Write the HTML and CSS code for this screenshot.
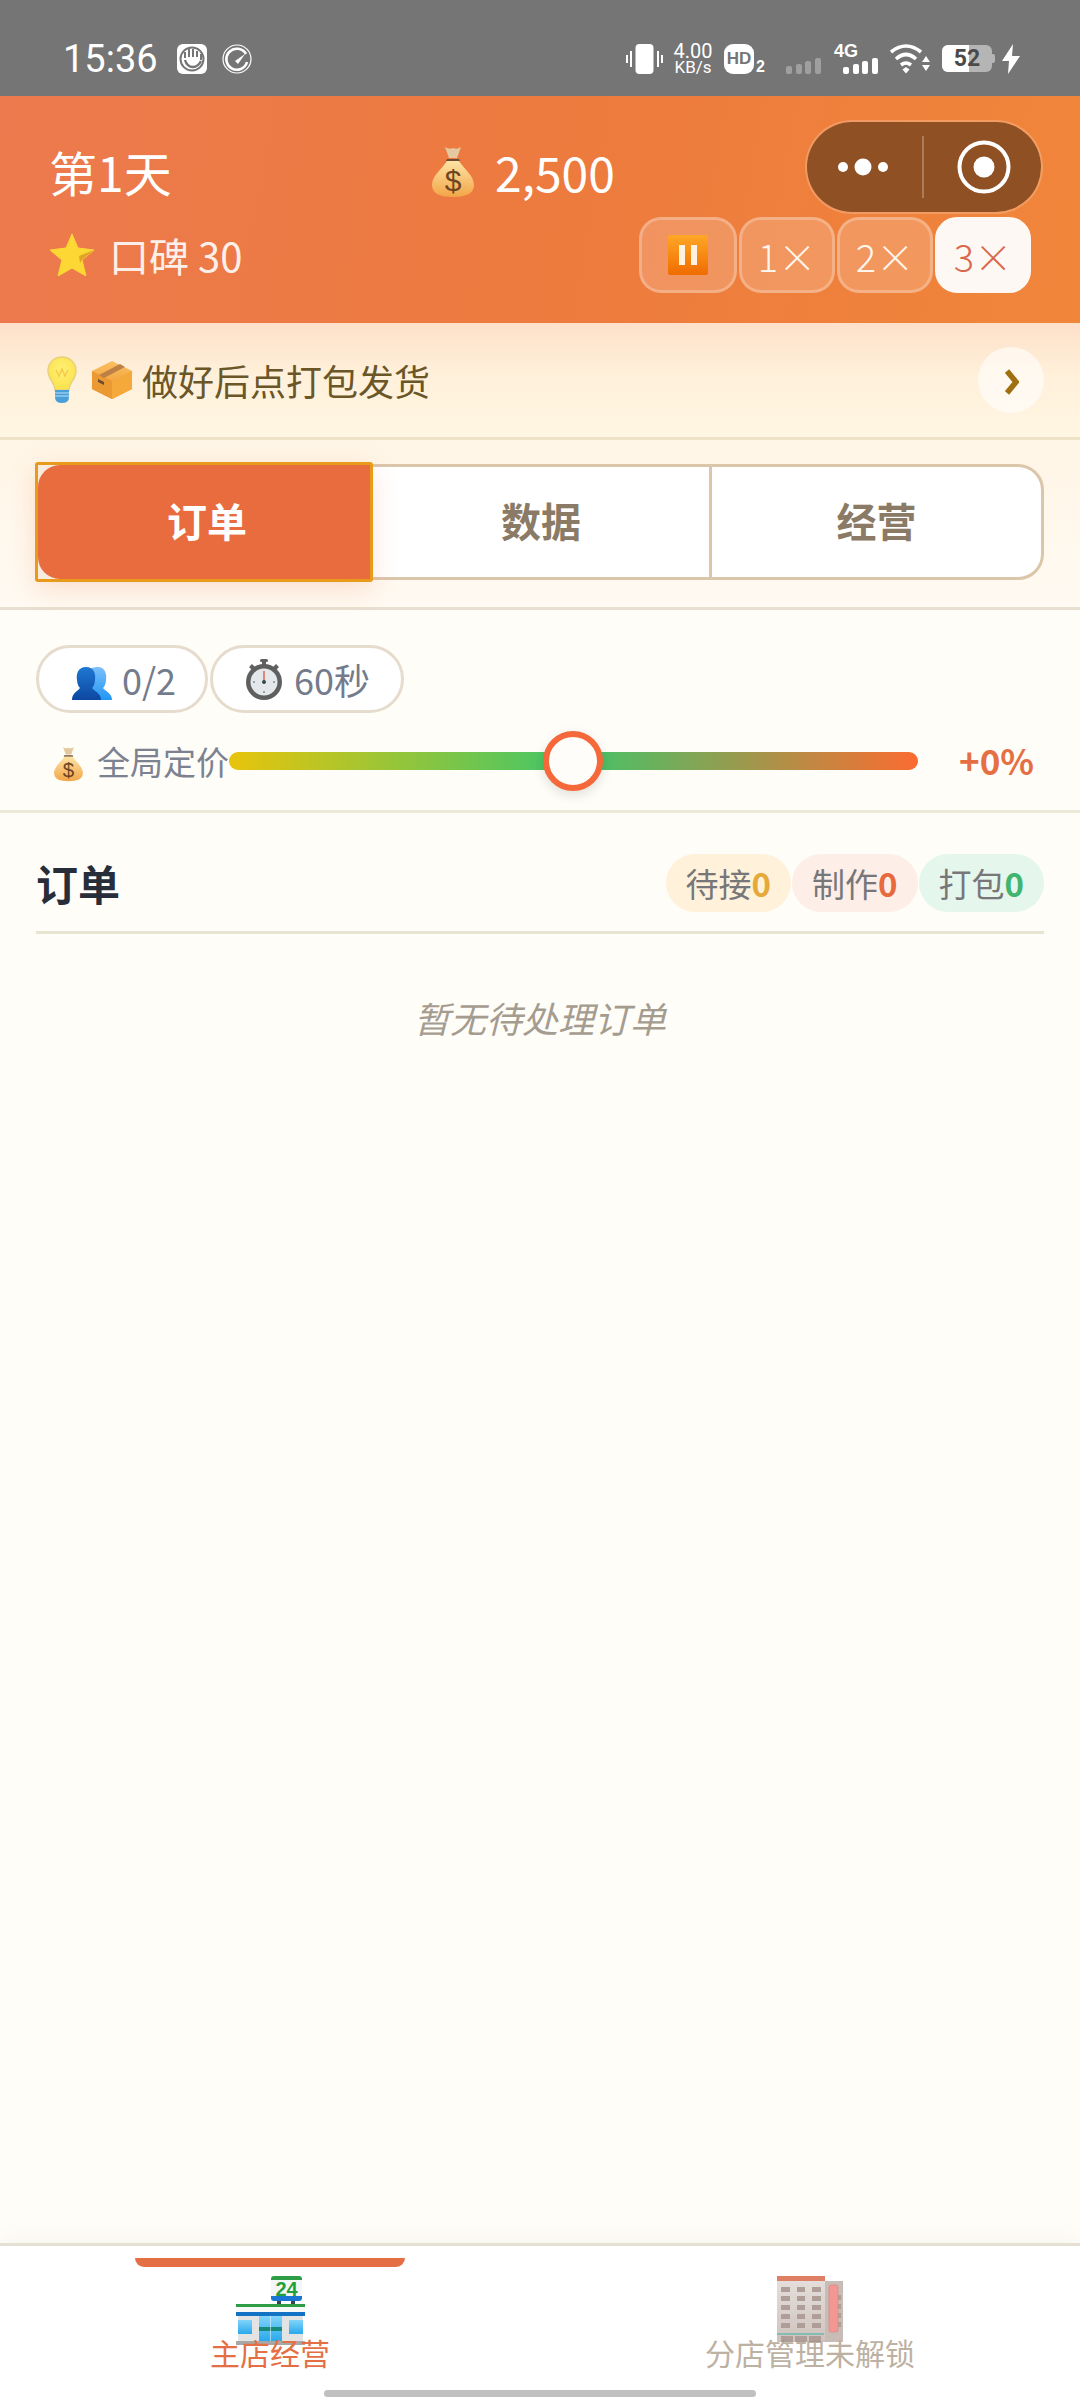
FILE: index.html
```html
<!DOCTYPE html>
<html>
<head>
  <title>订单</title>
  <link rel="stylesheet" href="styles.css">
</head>
<body>
  <svg class="defs" aria-hidden="true">
    <defs>
      <linearGradient id="bag" x1="0" y1="0" x2="0" y2="1"><stop offset="0" stop-color="#fde3a4"/><stop offset="1" stop-color="#f3a548"/></linearGradient>
      <linearGradient id="glass" x1="0" y1="0" x2="0" y2="1"><stop offset="0" stop-color="#81d4fa"/><stop offset="1" stop-color="#29a9ec"/></linearGradient>
      <linearGradient id="wall" x1="0" y1="0" x2="0" y2="1"><stop offset="0" stop-color="#e2dbd8"/><stop offset="1" stop-color="#c8b9b2"/></linearGradient>
      <linearGradient id="box" x1="0" y1="0" x2="0" y2="1"><stop offset="0" stop-color="#fbc062"/><stop offset="1" stop-color="#ee9028"/></linearGradient>
      <radialGradient id="bulb" cx=".5" cy=".4" r=".6"><stop offset="0" stop-color="#fff176"/><stop offset="1" stop-color="#fbe14b"/></radialGradient>
      <linearGradient id="pause" x1="0" y1="0" x2="0" y2="1"><stop offset="0" stop-color="#ffa726"/><stop offset="1" stop-color="#ef6c00"/></linearGradient>
      <linearGradient id="p1" x1="0" y1="0" x2="0" y2="1"><stop offset="0" stop-color="#1e78d2"/><stop offset="1" stop-color="#0d47a1"/></linearGradient>
      <linearGradient id="p2" x1="0" y1="0" x2="0" y2="1"><stop offset="0" stop-color="#7cc0fb"/><stop offset="1" stop-color="#2196f3"/></linearGradient>
    </defs>
  </svg>

  <div class="status-bar">
    <div class="status-left">
      <span class="time">15:36</span>
      <svg class="status-icon" viewBox="0 0 30 30">
        <rect width="30" height="30" rx="6" fill="#fff"/>
        <circle cx="15" cy="15" r="11.5" fill="none" stroke="#757575" stroke-width="2"/>
        <path d="M8 14 V8 M12 13 V5 M16 13 V5 M20 13 V7 M24 16 V10" stroke="#757575" stroke-width="2" fill="none"/>
        <path d="M8 16 Q10 23 16 23 Q21 23 24 17" stroke="#757575" stroke-width="2.4" fill="none"/>
      </svg>
      <svg class="status-icon gauge" viewBox="0 0 30 30">
        <circle cx="15" cy="15" r="14" fill="none" stroke="#fff" stroke-width="1.2"/>
        <path d="M24 10 A10.5 10.5 0 1 0 25 18" fill="none" stroke="#fff" stroke-width="2.6"/>
        <path d="M13 17 L23 10 L16 20 Z" fill="#fff"/>
      </svg>
    </div>
    <div class="status-right">
      <svg class="vibrate" viewBox="0 0 37 30">
        <rect x="9.500" y="0" width="18" height="30" rx="4" fill="#fff"/>
        <path d="M1 11 V19 M5 7 V23 M32 7 V23 M36 11 V19" stroke="#fff" stroke-width="2" fill="none"/>
      </svg>
      <div class="net-speed"><span>4.00</span><span>KB/s</span></div>
      <div class="hd"><span class="hd-box">HD</span><span class="hd-sub">2</span></div>
      <svg class="signal dim" viewBox="0 0 35 16">
        <rect x="0" y="8" width="6" height="8" rx="2"/><rect x="10" y="6" width="6" height="10" rx="2"/><rect x="19" y="3" width="6" height="13" rx="2"/><rect x="29" y="0" width="6" height="16" rx="2"/>
      </svg>
      <div class="sim">
        <span class="sim-type">4G</span>
        <svg class="signal" viewBox="0 0 35 16">
          <rect x="0" y="9" width="6" height="7" rx="2"/><rect x="10" y="6" width="6" height="10" rx="2"/><rect x="19" y="3" width="6" height="13" rx="2"/><rect x="29" y="0" width="6" height="16" rx="2"/>
        </svg>
      </div>
      <svg class="wifi" viewBox="0 0 40 30">
        <path d="M1 8 Q16 -4 31 8 M6 15 Q16 6 26 15 M11 21 Q16 17 21 21" fill="none" stroke="#fff" stroke-width="3.600"/>
        <path d="M12.500 25.500 L16 23 L19.500 25.500 L16 29.500 Z" fill="#fff"/>
        <path d="M36 12 L40 18 H32 Z M32 21 H40 L36 27 Z" fill="#fff"/>
      </svg>
      <div class="battery"><span class="battery-level"></span><span class="battery-num">52</span><span class="battery-tip"></span></div>
      <svg class="bolt" viewBox="0 0 18 30"><path d="M11 0 L0 17 H7 L6 30 L18 12 H10 Z" fill="#fff"/></svg>
    </div>
  </div>

  <header class="game-header">
    <div class="header-row">
      <span class="day">第1天</span>
      <span class="money">
        <svg class="money-icon" viewBox="0 0 42 54">
          <path d="M13 3 Q17 6 21 4 Q25 6 29 3 L25 14 H17 Z" fill="#e4c9a0"/>
          <path d="M15 15 H27 L28 17 H14 Z" fill="#6d4c33"/>
          <path d="M15 17 H27 C33 26 42 32 42 41 C42 50 33 53 21 53 C9 53 0 50 0 41 C0 32 9 26 15 17 Z" fill="url(#bag)"/>
          <text x="21" y="47" text-anchor="middle" class="bag-sign">$</text>
        </svg>
        2,500
      </span>
    </div>
    <div class="header-row second">
      <span class="rating">
        <svg class="star" viewBox="0 0 44 42">
          <path d="M22 0 L28 14 L44 16 L32 26 L36 42 L22 34 L8 42 L12 26 L0 16 L16 14 Z" fill="#fdd835" stroke="#fdd835" stroke-width="1" stroke-linejoin="round"/>
          <path d="M44 16 L32 26 L30 29 L29 22 Z" fill="#e0a526"/>
        </svg>
        <span>口碑 30</span>
      </span>
      <div class="speed-group">
        <div class="speed-btn pause-btn">
          <svg class="pause-icon" viewBox="0 0 40 40">
            <rect width="40" height="40" rx="2" fill="url(#pause)"/>
            <rect x="11" y="10" width="6" height="20" fill="#fff3e0"/><rect x="23" y="10" width="6" height="20" fill="#fff3e0"/>
          </svg>
        </div>
        <div class="speed-btn">1×</div>
        <div class="speed-btn">2×</div>
        <div class="speed-btn active">3×</div>
      </div>
    </div>
    <div class="capsule">
      <svg class="capsule-dots" viewBox="0 0 52 20"><circle cx="5" cy="10" r="5" fill="#fff"/><circle cx="25" cy="10" r="8.500" fill="#fff"/><circle cx="45" cy="10" r="5" fill="#fff"/></svg>
      <span class="capsule-line"></span>
      <svg class="capsule-rec" viewBox="0 0 54 54"><circle cx="27" cy="27" r="24.500" fill="none" stroke="#fff" stroke-width="4"/><circle cx="27" cy="27" r="10.500" fill="#fff"/></svg>
    </div>
  </header>

  <div class="hint-bar">
    <svg class="hint-bulb" viewBox="0 0 30 48">
      <path d="M15 1 C7 1 1 7 1 15 C1 23 8 27 8 34 H22 C22 27 29 23 29 15 C29 7 23 1 15 1 Z" fill="url(#bulb)" stroke="#e6d27c" stroke-width="1.500"/>
      <path d="M9 14 L12 20 L15 13 L18 20 L21 14" fill="none" stroke="#f7c948" stroke-width="1.500"/>
      <path d="M8 34 H22 V41 Q22 47 15 47 Q8 47 8 41 Z" fill="#4a9fd8"/>
      <path d="M8 37 H22 M8 40 H22" stroke="#b9e1f7" stroke-width="1.200"/>
    </svg>
    <svg class="hint-box" viewBox="0 0 40 38">
      <path d="M20 0 L40 10 V28 L20 38 L0 28 V10 Z" fill="url(#box)"/>
      <path d="M20 20 L40 10 V28 L20 38 Z" fill="#f6a93b"/>
      <path d="M0 10 L20 20 V38 L0 28 Z" fill="#eb9a33"/>
      <path d="M7 14 L28 3 L33 6 L12 17 Z" fill="#bd8146"/>
      <path d="M6 18 L12 21 V24 L6 21 Z" fill="#6d4c33"/>
    </svg>
    <span class="hint-text">做好后点打包发货</span>
    <div class="hint-arrow">
      <svg viewBox="0 0 14 26"><path d="M2 2 L11 13 L2 24" fill="none" stroke="#a06f12" stroke-width="5.500"/></svg>
    </div>
  </div>

  <div class="tabs-section">
    <div class="tabs">
      <div class="tab active"><span class="tab-fill">订单</span></div>
      <div class="tab">数据</div>
      <div class="tab">经营</div>
    </div>
  </div>

  <div class="stats-section">
    <div class="stat-pills">
      <div class="stat-pill">
        <svg class="people-icon" viewBox="0 0 40 33">
          <path d="M26 0 C33 0 35 7 34 13 C34 17 32 20 31 21 C33 24 40 26 40 33 H16 V3 C18 1 22 0 26 0 Z" fill="url(#p2)"/>
          <path d="M14 0 C22 0 24 7 23 13 C23 17 21 20 20 21 C22 24 29 26 29 33 H0 C0 26 6 24 8 21 C7 20 5 17 5 13 C4 7 6 0 14 0 Z" fill="url(#p1)"/>
        </svg>
        <span>0/2</span>
      </div>
      <div class="stat-pill">
        <svg class="watch-icon" viewBox="0 0 36 41">
          <rect x="14" y="0" width="8" height="3" rx="1.500" fill="#616161"/>
          <rect x="16" y="2" width="4" height="5" fill="#616161"/>
          <path d="M3 8 L6 5 L10 9 L7 12 Z M33 8 L30 5 L26 9 L29 12 Z" fill="#616161"/>
          <circle cx="18" cy="23" r="18" fill="#5f5f5f"/>
          <circle cx="18" cy="23" r="13.500" fill="#e4e8ea"/>
          <path d="M18 12 V23" stroke="#d9453a" stroke-width="1.200"/>
          <circle cx="18" cy="23" r="2" fill="#37474f"/>
          <circle cx="18" cy="33" r="1" fill="#78909c"/><circle cx="8" cy="23" r="1" fill="#78909c"/><circle cx="28" cy="23" r="1" fill="#78909c"/>
        </svg>
        <span>60秒</span>
      </div>
    </div>
    <div class="price-row">
      <svg class="price-icon" viewBox="0 0 42 54">
        <path d="M13 3 Q17 6 21 4 Q25 6 29 3 L25 14 H17 Z" fill="#e4c9a0"/>
        <path d="M15 15 H27 L28 17 H14 Z" fill="#6d4c33"/>
        <path d="M15 17 H27 C33 26 42 32 42 41 C42 50 33 53 21 53 C9 53 0 50 0 41 C0 32 9 26 15 17 Z" fill="url(#bag)"/>
        <text x="21" y="47" text-anchor="middle" class="bag-sign">$</text>
      </svg>
      <span class="price-label">全局定价</span>
      <div class="slider">
        <span class="slider-thumb"></span>
      </div>
      <span class="price-value">+0%</span>
    </div>
  </div>

  <main class="orders">
    <div class="orders-head">
      <h2>订单</h2>
      <div class="order-counts">
        <span class="count waiting">待接<b>0</b></span>
        <span class="count making">制作<b>0</b></span>
        <span class="count packing">打包<b>0</b></span>
      </div>
    </div>
    <p class="orders-empty">暂无待处理订单</p>
  </main>

  <nav class="bottom-nav">
    <div class="nav-item active">
      <span class="nav-mark"></span>
      <svg class="nav-icon" viewBox="0 0 69 69">
        <path d="M35 3 Q35 0 38 0 H63 Q66 0 66 3 V5 H35 Z" fill="#2e9e46"/>
        <rect x="35" y="4" width="31" height="17" fill="#f5f7f7"/>
        <path d="M35 20 H66 V22 Q66 25 63 25 H38 Q35 25 35 22 Z" fill="#1976d2"/>
        <text x="50.500" y="19.500" text-anchor="middle" class="store-num">24</text>
        <rect x="41" y="25" width="4" height="3" fill="#37474f"/><rect x="55" y="25" width="4" height="3" fill="#37474f"/>
        <rect x="0" y="28" width="69" height="3" fill="#2e9e46"/>
        <rect x="0" y="31" width="69" height="6" fill="#f7f9f9"/>
        <rect x="0" y="36" width="69" height="4" fill="#1272c4"/>
        <rect x="2" y="40" width="65" height="25" fill="#e3e3e3"/>
        <rect x="2" y="44" width="14" height="14" fill="url(#glass)"/>
        <rect x="53" y="44" width="14" height="14" fill="url(#glass)"/>
        <rect x="23" y="40" width="23" height="25" fill="url(#glass)"/>
        <rect x="23" y="51" width="23" height="4" fill="#178a7c"/>
        <rect x="34.200" y="40" width="0.600" height="25" fill="#e1f5fe"/>
        <rect x="0" y="65" width="69" height="4" fill="#a7a7a7"/>
      </svg>
      <span class="nav-label">主店经营</span>
    </div>
    <div class="nav-item locked">
      <svg class="nav-icon" viewBox="0 0 66 67">
        <rect x="48" y="5" width="18" height="61" fill="#bfb1ab"/>
        <rect x="0" y="0" width="48" height="66" fill="url(#wall)"/>
        <rect x="0" y="0" width="48" height="5" fill="#d9694c"/>
        <g fill="#a08e86">
          <rect x="4" y="11" width="9" height="5"/><rect x="20" y="11" width="8" height="5"/><rect x="35" y="11" width="9" height="5"/>
          <rect x="4" y="20" width="9" height="5"/><rect x="20" y="20" width="8" height="5"/><rect x="35" y="20" width="9" height="5"/>
          <rect x="4" y="29" width="9" height="5"/><rect x="20" y="29" width="8" height="5"/><rect x="35" y="29" width="9" height="5"/>
          <rect x="4" y="38" width="9" height="5"/><rect x="20" y="38" width="8" height="5"/><rect x="35" y="38" width="9" height="5"/>
          <rect x="4" y="47" width="9" height="5"/><rect x="20" y="47" width="8" height="5"/><rect x="35" y="47" width="9" height="5"/>
          <rect x="4" y="60" width="12" height="6"/><rect x="18" y="60" width="12" height="6"/><rect x="32" y="60" width="12" height="6"/>
          <rect x="61" y="19" width="3" height="5"/><rect x="61" y="28" width="3" height="5"/><rect x="61" y="37" width="3" height="5"/><rect x="61" y="46" width="3" height="5"/>
        </g>
        <rect x="0" y="57" width="47" height="2" fill="#6fb0a6"/>
        <rect x="52" y="9" width="9" height="47" rx="2" fill="#f28580" stroke="#d9695f" stroke-width="0.600"/>
      </svg>
      <span class="nav-label">分店管理未解锁</span>
    </div>
    <span class="home-bar"></span>
  </nav>
</body>
</html>
```

FILE: styles.css
```css
* {
  box-sizing: border-box;
}

body {
  font-family: "Noto Sans CJK SC", "Noto Sans", sans-serif;
  margin: 0;
  width: 1080px;
  height: 2400px;
  display: flex;
  flex-direction: column;
  background-color: #fffdf8;
  overflow: hidden;
}

.defs {
  position: absolute;
  width: 0;
  height: 0;
}

.bag-sign {
  font-family: "Liberation Sans", sans-serif;
  font-size: 30px;
  fill: #6d4523;
}

.store-num {
  font-family: "Liberation Sans", sans-serif;
  font-size: 20px;
  font-weight: bold;
  fill: #1fa03c;
}

/* status bar */
.status-bar {
  height: 96px;
  flex: none;
  background-color: #757575;
  display: flex;
  justify-content: space-between;
  align-items: center;
  padding: 21px 60px 0 63px;
  color: white;
}

.status-left,
.status-right {
  display: flex;
  align-items: center;
}

.time {
  font-family: Roboto, sans-serif;
  font-size: 38px;
  width: 114px;
}

.status-icon {
  width: 30px;
  height: 30px;
  margin-right: 15px;
}

.vibrate {
  width: 37px;
  height: 30px;
}

.net-speed {
  font-family: Roboto, sans-serif;
  display: flex;
  flex-direction: column;
  align-items: center;
  width: 42px;
  margin-left: 9px;
  font-size: 17px;
  line-height: 14px;
}

.net-speed span:first-child {
  font-size: 20px;
  line-height: 17px;
}

.hd {
  display: flex;
  align-items: flex-end;
  margin-left: 10px;
  height: 30px;
}

.hd-box {
  width: 30px;
  height: 30px;
  border-radius: 9px;
  background-color: white;
  color: #757575;
  font-family: "Liberation Sans", sans-serif;
  font-size: 17px;
  font-weight: bold;
  line-height: 30px;
  text-align: center;
}

.hd-sub {
  font-family: "Liberation Sans", sans-serif;
  font-size: 16px;
  font-weight: bold;
  line-height: 14px;
  margin-left: 2px;
}

.signal {
  width: 35px;
  height: 16px;
  fill: white;
  display: block;
}

.signal.dim {
  margin-left: 21px;
  margin-top: 14px;
  opacity: .3;
}

.sim {
  margin-left: 13px;
  width: 44px;
  height: 30px;
  display: flex;
  flex-direction: column;
  align-items: flex-end;
}

.sim-type {
  align-self: flex-start;
  font-family: "Liberation Sans", sans-serif;
  font-size: 18px;
  font-weight: bold;
  line-height: 14px;
}

.wifi {
  width: 40px;
  height: 30px;
  margin-left: 12px;
}

.battery {
  position: relative;
  width: 50px;
  height: 27px;
  margin-left: 12px;
  border-radius: 6px;
  background-color: #b5b5b5;
  font-family: Roboto, sans-serif;
  font-size: 23px;
  font-weight: bold;
  line-height: 27px;
  text-align: center;
  color: #4a4a4a;
}

.battery-level {
  position: absolute;
  left: 0;
  top: 0;
  width: 27px;
  height: 27px;
  background-color: white;
  border-radius: 6px 0 0 6px;
}

.battery-num {
  position: relative;
}

.battery-tip {
  position: absolute;
  right: -3px;
  top: 9px;
  width: 3px;
  height: 9px;
  background-color: #b5b5b5;
  border-radius: 0 2px 2px 0;
}

.bolt {
  width: 18px;
  height: 30px;
  margin-left: 10px;
}

/* game header */
.game-header {
  position: relative;
  height: 227px;
  flex: none;
  padding: 45px 49px 0 49px;
  background: linear-gradient(100deg, #ec7a4e 0%, #ed7a3e 50%, #f0863a 100%);
  color: white;
}

.header-row {
  display: flex;
  align-items: center;
  height: 60px;
}

.header-row.second {
  justify-content: space-between;
  height: 76px;
  margin-top: 16px;
}

.day {
  font-size: 48px;
  width: 383px;
}

.money {
  display: flex;
  align-items: center;
  font-size: 48px;
}

.money-icon {
  width: 42px;
  height: 54px;
  margin-right: 21px;
}

.rating {
  display: flex;
  align-items: center;
  gap: 15px;
  padding-left: 1px;
  font-size: 40px;
  color: rgba(255, 255, 255, .9);
}

.star {
  width: 44px;
  height: 42px;
}

.speed-group {
  display: flex;
  gap: 2px;
}

.speed-btn {
  width: 96px;
  height: 76px;
  border: 3px solid rgba(255, 255, 255, .25);
  border-radius: 22px;
  background-color: rgba(255, 255, 255, .18);
  display: flex;
  align-items: center;
  justify-content: center;
  font-size: 38px;
  font-weight: 300;
  color: #fff6ec;
}

.speed-btn.pause-btn {
  width: 98px;
}

.speed-btn.active {
  border-color: #fdf8f3;
  background-color: #fdf8f3;
  color: #d9694c;
}

.pause-icon {
  width: 40px;
  height: 40px;
}

.capsule {
  position: absolute;
  left: 805px;
  top: 24px;
  width: 238px;
  height: 94px;
  border: 2px solid rgba(255, 255, 255, .2);
  border-radius: 47px;
  background-color: #8f5023;
  background-clip: padding-box;
  display: flex;
  align-items: center;
}

.capsule-dots {
  width: 52px;
  height: 20px;
  margin-left: 31px;
}

.capsule-line {
  width: 2px;
  height: 62px;
  margin-left: 32px;
  background-color: rgba(255, 255, 255, .25);
}

.capsule-rec {
  width: 54px;
  height: 54px;
  margin-left: 33px;
}

/* hint */
.hint-bar {
  height: 117px;
  flex: none;
  padding: 0 36px 0 47px;
  display: flex;
  align-items: center;
  background: linear-gradient(180deg, #fde0c9 0%, #fff0da 45%, #fff6e2 100%);
  border-bottom: 3px solid #eee3c6;
  font-size: 36px;
  color: #6b5628;
}

.hint-bulb {
  width: 30px;
  height: 48px;
  margin-right: 15px;
}

.hint-box {
  width: 40px;
  height: 38px;
  margin-right: 10px;
}

.hint-text {
  flex: 1;
}

.hint-arrow {
  width: 66px;
  height: 66px;
  border-radius: 50%;
  background-color: rgba(255, 255, 255, .6);
  display: flex;
  align-items: center;
  justify-content: center;
}

.hint-arrow svg {
  width: 14px;
  height: 26px;
  margin-left: 2px;
  margin-top: 4px;
}

/* tabs */
.tabs-section {
  height: 170px;
  flex: none;
  padding: 24px 36px 0 35px;
  background: linear-gradient(180deg, #fff5e6 0%, #fffaf2 100%);
  border-bottom: 3px solid #e8dfd0;
}

.tabs {
  display: flex;
  height: 116px;
  border: 3px solid #dcc6aa;
  border-radius: 26px;
  background-color: white;
}

.tab {
  flex: 0 0 339px;
  display: flex;
  align-items: center;
  justify-content: center;
  padding-bottom: 4px;
  font-size: 40px;
  font-weight: bold;
  color: #8a7a66;
  border-right: 3px solid #dcc6aa;
}

.tab:last-child {
  flex: 1;
  border-right: none;
}

.tab.active {
  flex-basis: 338px;
  margin: -5px 0 -5px -3px;
  padding-bottom: 0;
  border: 3px solid #e89b1a;
  border-radius: 3px;
  background-color: #f9ecdf;
  color: white;
  box-shadow: 0 8px 26px rgba(233, 108, 62, .18);
  z-index: 1;
}

.tab-fill {
  width: 100%;
  height: 100%;
  display: flex;
  align-items: center;
  justify-content: center;
  padding: 0 0 4px 6px;
  background-color: #e96c3e;
  border-radius: 22px 0 0 22px;
}

/* stats */
.stats-section {
  height: 203px;
  flex: none;
  padding: 35px 36px 0;
  border-bottom: 3px solid #eee8da;
}

.stat-pills {
  display: flex;
  gap: 2px;
}

.stat-pill {
  height: 68px;
  padding: 0 29px 0 33px;
  display: flex;
  align-items: center;
  gap: 10px;
  border: 3px solid #e6dccd;
  border-radius: 34px;
  background-color: white;
  font-size: 36px;
  color: #737b8c;
}

.stat-pill + .stat-pill {
  padding-right: 31px;
  gap: 12px;
}

.people-icon {
  width: 40px;
  height: 33px;
  margin-top: 8px;
}

.watch-icon {
  width: 36px;
  height: 41px;
}

.price-row {
  display: flex;
  align-items: center;
  margin-top: 30px;
  height: 40px;
}

.price-icon {
  width: 29px;
  height: 37px;
  margin-left: 18px;
  margin-right: 14px;
}

.price-label {
  font-size: 33px;
  color: #7c8290;
  width: 132px;
  padding-bottom: 5px;
  white-space: nowrap;
}

.slider {
  position: relative;
  width: 689px;
  height: 18px;
  margin-top: -4px;
  border-radius: 9px;
  background: linear-gradient(90deg, #e8c40c 0%, #3fc66a 50%, #fb6b30 100%);
}

.slider-thumb {
  position: absolute;
  left: 314px;
  top: -21px;
  width: 60px;
  height: 60px;
  border: 6px solid #f4683a;
  border-radius: 50%;
  background-color: #fffdf9;
  box-shadow: 0 4px 12px rgba(0, 0, 0, .12);
}

.price-value {
  margin-left: 41px;
  padding-bottom: 7px;
  font-size: 35px;
  font-weight: bold;
  color: #e56f44;
}

/* orders */
.orders {
  flex: 1;
  padding: 39px 36px 0;
}

.orders-head {
  display: flex;
  justify-content: space-between;
  align-items: center;
  padding-bottom: 18px;
  border-bottom: 3px solid #e8e4d2;
}

.orders-head h2 {
  margin: 0;
  font-size: 42px;
  font-weight: bold;
  color: #272e3a;
}

.order-counts {
  display: flex;
  gap: 1px;
}

.count {
  height: 58px;
  padding: 0 20px;
  display: flex;
  align-items: center;
  border-radius: 29px;
  font-size: 33px;
  color: #77777a;
}

.count b {
  font-weight: bold;
}

.waiting {
  background-color: #fff1da;
}

.waiting b {
  color: #e5a93a;
}

.making {
  background-color: #fdeee8;
}

.making b {
  color: #e7693d;
}

.packing {
  background-color: #e5f6ec;
}

.packing b {
  color: #3fb56f;
}

.orders-empty {
  margin: 57px 0 0;
  text-align: center;
  font-size: 36px;
  font-style: italic;
  color: #a59c90;
}

/* bottom nav */
.bottom-nav {
  position: relative;
  height: 157px;
  flex: none;
  display: flex;
  background-color: white;
  border-top: 3px solid #e6e0d4;
  box-shadow: 0 -4px 20px rgba(120, 100, 70, .06);
}

.nav-item {
  position: relative;
  flex: 1;
  display: flex;
  flex-direction: column;
  align-items: center;
  padding-top: 30px;
}

.nav-mark {
  position: absolute;
  left: 135px;
  top: 12px;
  width: 270px;
  height: 9px;
  background-color: #e56f44;
  border-radius: 0 0 9px 9px;
}

.nav-icon {
  width: 69px;
  height: 69px;
}

.locked .nav-icon {
  width: 66px;
  height: 67px;
  opacity: .85;
}

.nav-label {
  margin-top: -15px;
  font-size: 30px;
  line-height: 44px;
  color: #e56f44;
}

.locked .nav-label {
  margin-top: -13px;
  color: #bdb1a3;
}

.home-bar {
  position: absolute;
  left: 324px;
  bottom: 3px;
  width: 432px;
  height: 7px;
  border-radius: 4px;
  background-color: #c0c0c0;
}
```
